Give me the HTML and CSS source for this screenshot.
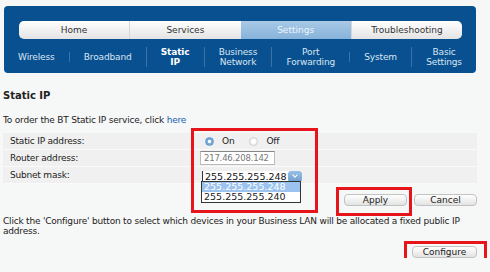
FILE: index.html
```html
<!DOCTYPE html>
<html lang="en">
<head>
    <meta charset="UTF-8">
    <title>Static IP</title>
    <link rel="stylesheet" href="styles.css">
</head>
<body>

    <div class="nav">
        <ul class="tabs">
            <li>Home</li>
            <li>Services</li>
            <li class="active">Settings</li>
            <li>Troubleshooting</li>
        </ul>
        <ul class="subnav">
            <li>Wireless</li>
            <li>Broadband</li>
            <li class="current">Static<br>IP</li>
            <li>Business<br>Network</li>
            <li>Port<br>Forwarding</li>
            <li>System</li>
            <li>Basic<br>Settings</li>
        </ul>
    </div>

    <div class="content">
        <h2>Static IP</h2>
        <p class="intro">To order the BT Static IP service, click <a href="#">here</a></p>

        <div class="form-area">
            <div class="row">
                <span class="label">Static IP address:</span>
                <span class="value">
                    <span class="radio on"></span><span class="radio-text">On</span>
                    <span class="radio"></span><span class="radio-text">Off</span>
                </span>
            </div>
            <div class="row">
                <span class="label">Router address:</span>
                <span class="value"><span class="text-input">217.46.208.142</span></span>
            </div>
            <div class="row">
                <span class="label">Subnet mask:</span>
                <span class="value">
                    <span class="select"><span class="select-text">255.255.255.248</span><span class="select-arrow"></span></span>
                </span>
            </div>

            <ul class="options">
                <li class="selected">255.255.255.248</li>
                <li>255.255.255.240</li>
            </ul>

            <div class="buttons">
                <button>Apply</button>
                <button>Cancel</button>
            </div>

            <!-- annotation boxes -->
            <div class="mark mark-fields"></div>
            <div class="mark mark-apply"></div>
        </div>

        <p class="note">Click the 'Configure' button to select which devices in your Business LAN will be allocated a fixed public IP address.</p>

        <div class="configure">
            <button>Configure</button>
            <div class="mark mark-configure"></div>
        </div>
    </div>

</body>
</html>
```

FILE: styles.css
```css
body {
    font-family: "DejaVu Sans", Verdana, sans-serif;
    font-size: 9px;
    color: #222;
    background-color: #f6f7f7;
    margin: 0;
    padding: 0;
}
ul {
    list-style: none;
    margin: 0;
    padding: 0;
}
.nav {
    margin: 6px 14px 0 4px;
    height: 67px;
    box-sizing: border-box;
    padding: 15px 14px 0 15px;
    background-color: #08508f;
    border-radius: 4px;
}
.tabs {
    display: flex;
    height: 18px;
    border-radius: 5px;
    overflow: hidden;
    background: linear-gradient(#ffffff, #e4e4e4);
}
.tabs li {
    flex: 1;
    text-align: center;
    line-height: 18px;
    color: #333;
    border-left: 1px solid #d6d6d6;
}
.tabs li:first-child {
    border-left: none;
}
.tabs li.active {
    background: linear-gradient(#a9c9e6, #86b3da);
    color: #eef5fb;
    border-left: none;
}
.subnav {
    display: flex;
    align-items: center;
    margin: 5px -14px 0 -15px;
    height: 26px;
}
.subnav li {
    flex: auto;
    padding: 0 8px;
    text-align: center;
    color: #d8e6f3;
    line-height: 10px;
    border-left: 1px solid #3b72a8;
    letter-spacing: -0.15px;
}
.subnav li:first-child {
    border-left: none;
}
.subnav li.current {
    color: #fff;
    font-weight: bold;
}
.content {
    padding: 0 13px 0 3px;
    letter-spacing: -0.2px;
}
h2 {
    font-size: 10px;
    margin: 17px 0 0;
    line-height: 12px;
    letter-spacing: 0;
}
.intro {
    margin: 12px 0 0;
    line-height: 12px;
}
.intro a {
    color: #1a5fb4;
    text-decoration: none;
}
.form-area {
    position: relative;
    margin-top: 7px;
}
.row {
    display: flex;
    align-items: center;
    height: 16px;
    background-color: #f0f0f0;
    border-bottom: 1px solid #fafafa;
}
.label {
    width: 190px;
    padding-left: 7px;
}
.value {
    display: flex;
    align-items: center;
}
.radio {
    width: 7px;
    height: 7px;
    border-radius: 50%;
    border: 1px solid #d0d0d0;
    background: radial-gradient(#ffffff 30%, #e2e2e2);
    margin: 0 8px 0 4px;
}
.radio.on {
    margin-left: 5px;
    border-color: #6b9ccb;
    background: radial-gradient(#ffffff 25%, #7fb0de 40%, #5a93c9);
}
.radio-text {
    margin-right: 11px;
}
.text-input {
    width: 70px;
    height: 12px;
    line-height: 12px;
    padding-left: 3px;
    color: #777;
    background-color: #fff;
    border: 1px solid #bbb;
    border-top-color: #888;
    font-size: 8.5px;
}
.select {
    display: flex;
    height: 11px;
    width: 100px;
    margin: 2px 0 0 2px;
    background-color: #fff;
    border-radius: 4px 0 0 4px;
}
.select-text {
    flex: 1;
    padding-left: 2px;
    line-height: 11px;
    color: #111;
    border-left: 1px solid #333;
    font-size: 9.5px;
    letter-spacing: 0;
}
.select-arrow {
    width: 14px;
    border-radius: 3px;
    background: linear-gradient(#98c0e6, #6d9fd0);
    position: relative;
}
.select-arrow::after {
    content: "";
    position: absolute;
    left: 5px;
    top: 2px;
    width: 3px;
    height: 3px;
    border-right: 1px solid #fff;
    border-bottom: 1px solid #fff;
    transform: rotate(45deg);
}
.options {
    position: absolute;
    left: 198px;
    top: 48px;
    width: 98px;
    background-color: #fff;
    border: 1px solid #333;
    font-size: 9.5px;
    line-height: 10px;
    letter-spacing: 0;
}
.options li {
    padding-left: 2px;
}
.options li.selected {
    background-color: #9cc3f0;
    color: #fff;
}
.buttons {
    display: flex;
    justify-content: flex-end;
    gap: 7px;
    margin-top: 10px;
}
button {
    font-family: inherit;
    font-size: 9px;
    color: #222;
    width: 63px;
    height: 12px;
    padding: 0;
    line-height: 10px;
    border: 1px solid #c2c2c2;
    border-radius: 4px;
    background: linear-gradient(#ffffff, #e3e3e3);
}
.note {
    margin: 10px 0 0;
    line-height: 10px;
}
.configure {
    position: relative;
    display: flex;
    justify-content: flex-end;
    margin-top: 10px;
}
.configure button {
    width: 65px;
}
.mark {
    position: absolute;
    border: 3px solid #e8141c;
}
.mark-fields {
    left: 188px;
    top: -5px;
    width: 121px;
    height: 79px;
}
.mark-apply {
    left: 333px;
    top: 54px;
    width: 70px;
    height: 23px;
}
.mark-configure {
    right: -10px;
    top: -5px;
    width: 77px;
    height: 17px;
}
```
